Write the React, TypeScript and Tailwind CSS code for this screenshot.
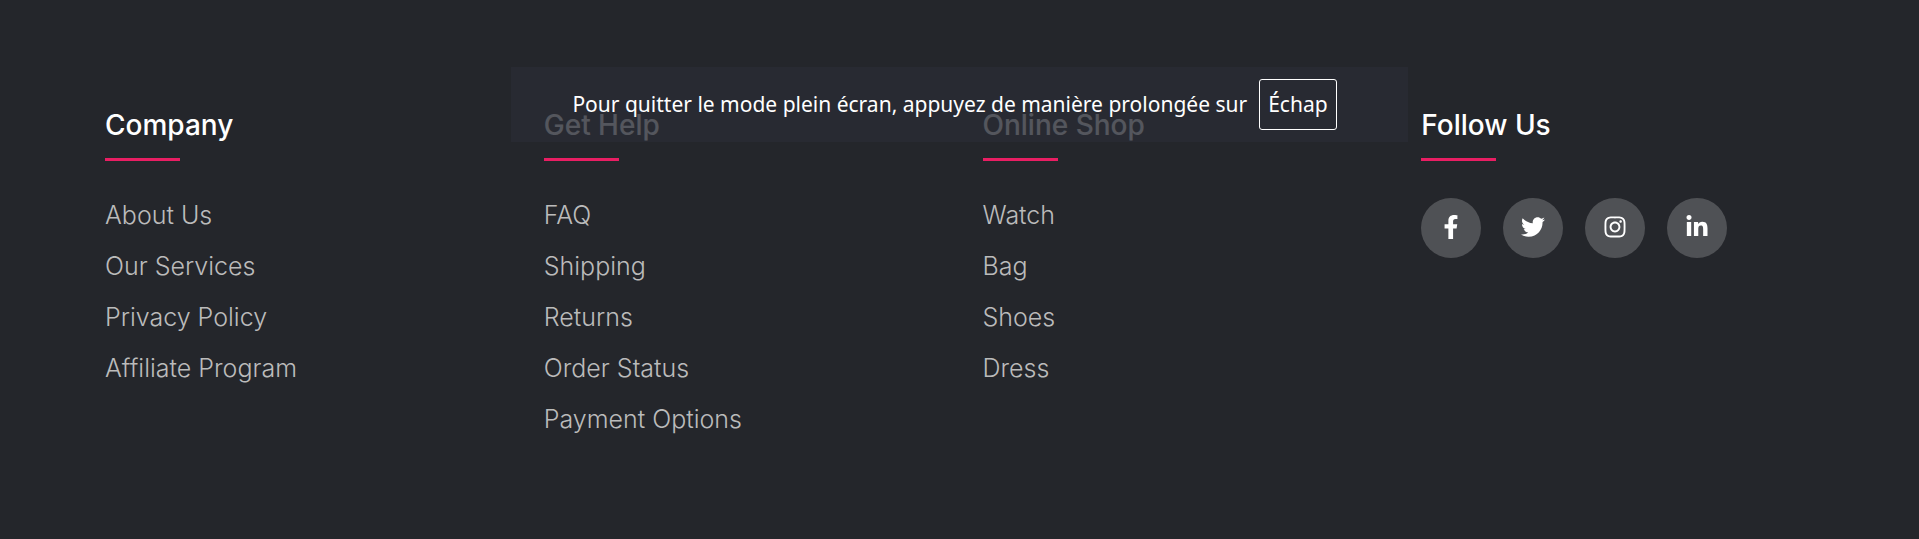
import type { ReactNode } from "react";
import { FaFacebookF, FaInstagram, FaLinkedinIn, FaTwitter } from "react-icons/fa";

const columns = [
  { title: "Company", links: ["About Us", "Our Services", "Privacy Policy", "Affiliate Program"] },
  { title: "Get Help", links: ["FAQ", "Shipping", "Returns", "Order Status", "Payment Options"] },
  { title: "Online Shop", links: ["Watch", "Bag", "Shoes", "Dress"] },
];

const socials = [
  { name: "Facebook", Icon: FaFacebookF },
  { name: "Twitter", Icon: FaTwitter },
  { name: "Instagram", Icon: FaInstagram },
  { name: "LinkedIn", Icon: FaLinkedinIn },
];

function Column({ title, children }: { title: string; children: ReactNode }) {
  return (
    <section className="px-[23px]">
      <h4 className="text-[28px] leading-8 font-medium text-white">{title}</h4>
      <div className="mt-[17px] mb-[37px] h-[3px] w-[75px] bg-[#e91e63]" />
      {children}
    </section>
  );
}

function FullscreenNotice() {
  return (
    <div className="absolute inset-x-0 top-[67px] flex justify-center">
      <div
        role="status"
        className="flex h-[75px] items-center gap-3 bg-[#292c34]/80 pr-[71px] pl-[61px] font-['Noto_Sans','Open_Sans',sans-serif] text-[21px] whitespace-nowrap text-white"
      >
        <span>Pour quitter le mode plein écran, appuyez de manière prolongée sur</span>
        <kbd className="rounded-[3px] border border-white px-2 py-2 font-['Noto_Sans','Open_Sans',sans-serif] leading-[33px]">
          Échap
        </kbd>
      </div>
    </div>
  );
}

export default function App() {
  return (
    <div className="relative min-h-screen bg-[#24262b] font-['Inter',sans-serif]">
      <footer className="mx-auto grid max-w-[1755px] grid-cols-4 pt-[109px] pb-[105px]">
        {columns.map((column) => (
          <Column key={column.title} title={column.title}>
            <ul className="flex flex-col gap-[17px]">
              {column.links.map((link) => (
                <li key={link} className="text-[25px] leading-[34px] font-light text-[#bbbbbb]">
                  <a href="#" className="block">{link}</a>
                </li>
              ))}
            </ul>
          </Column>
        ))}
        <Column title="Follow Us">
          <div className="flex gap-[22px]">
            {socials.map(({ name, Icon }) => (
              <a
                key={name}
                href="#"
                aria-label={name}
                className="flex size-[60px] items-center justify-center rounded-full bg-white/20 pb-0.5 text-2xl text-white"
              >
                <Icon />
              </a>
            ))}
          </div>
        </Column>
      </footer>
      <FullscreenNotice />
    </div>
  );
}
